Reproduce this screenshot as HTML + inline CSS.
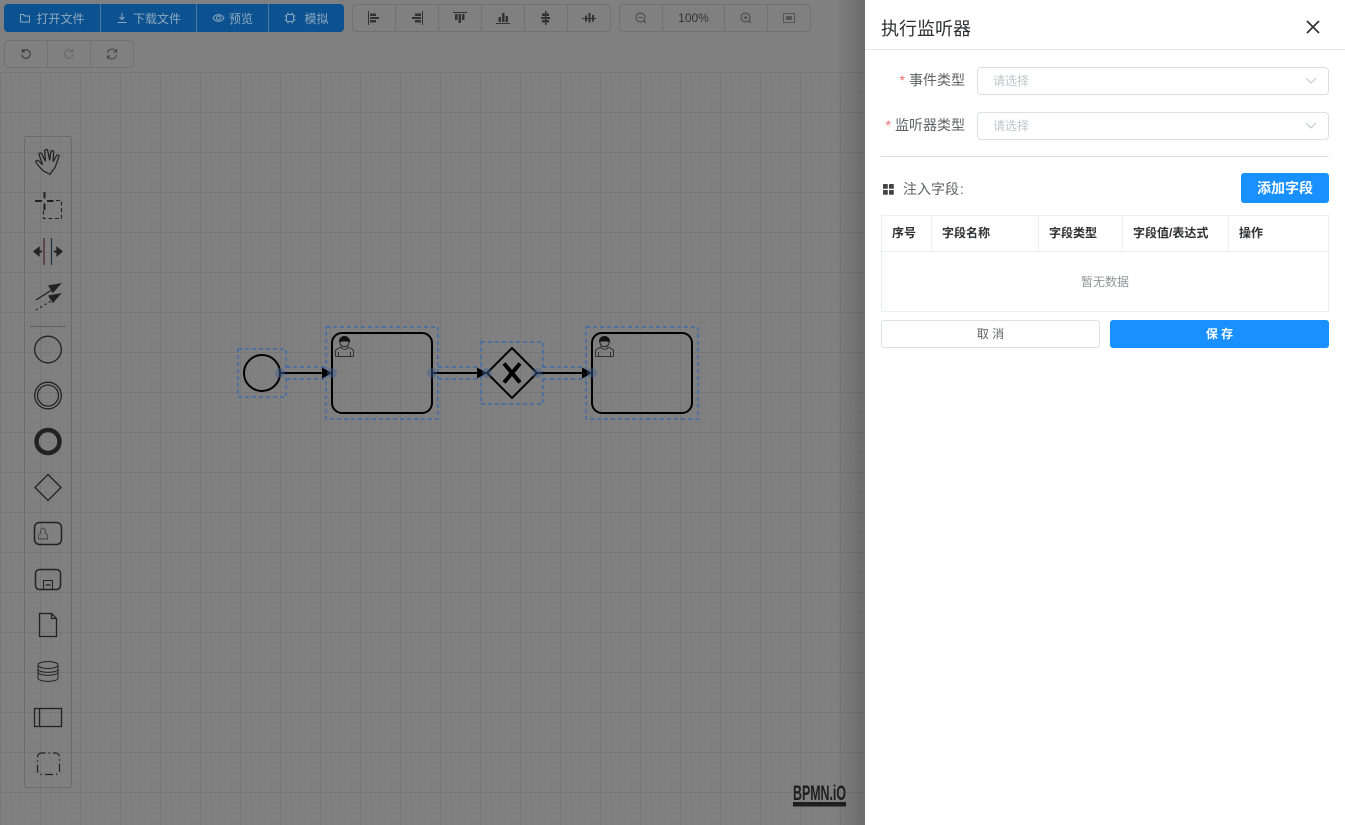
<!DOCTYPE html>
<html lang="zh"><head><meta charset="utf-8"><title>执行监听器</title>
<style>
*{box-sizing:border-box}
html,body{margin:0;padding:0;width:1345px;height:825px;overflow:hidden;background:#808080;font-family:"Liberation Sans","Noto Sans CJK SC",sans-serif}
.a{position:absolute}
#grid{left:0;top:72px;width:865px;height:753px;
background-image:linear-gradient(#767676 1px,transparent 1px),linear-gradient(90deg,#767676 1px,transparent 1px),linear-gradient(#7c7c7c 1px,transparent 1px),linear-gradient(90deg,#7c7c7c 1px,transparent 1px);
background-size:40px 40px,40px 40px,10px 10px,10px 10px;background-position:0 0,0 0,0 0,0 0}
.grp{position:absolute;height:28px;border:1px solid #717171;border-radius:4px;display:flex;color:#333;font-size:12px}
.grp>div{border-right:1px solid #717171;height:100%;display:flex;align-items:center;justify-content:center;white-space:nowrap}
.grp>div:last-child{border-right:0}
.prim{background:#0c5291;border:0;color:#8fa9bf;border-radius:4px}
.prim>div{border-right:1px solid #4d7ca8}
#shadow{left:835px;top:0;width:30px;height:825px;background:linear-gradient(90deg,rgba(0,0,0,0),rgba(0,0,0,.16))}
#panel{left:865px;top:0;width:480px;height:825px;background:#fff}
.lab{position:absolute;right:380px;font-size:14px;line-height:20px;color:#606266;white-space:nowrap}
.lab i{color:#f56c6c;font-style:normal;margin-right:4px}
.inp{position:absolute;left:112px;width:352px;height:28px;border:1px solid #dcdfe6;border-radius:4px;font-size:12px;line-height:26px;padding-left:15px;color:#c0c4cc}
.inp svg{position:absolute;right:11px;top:9px}
.th{position:absolute;top:216px;height:35px;line-height:34px;font-size:12px;font-weight:bold;color:#303133;white-space:nowrap}
.vl{position:absolute;top:216px;width:1px;height:35px;background:#ebeef5}
</style></head><body>
<div class="a" id="grid"></div>

<div class="grp prim" style="left:4px;top:4px;width:340px">
<div style="width:97px;gap:5px"><svg width="12" height="12" viewBox="0 0 12 12" fill="none" stroke="#8fa9bf"><path d="M1.500 10V2.500h3l1 1.500h5v6z"/></svg>打开文件</div>
<div style="width:96px;gap:5px"><svg width="12" height="12" viewBox="0 0 12 12" fill="none" stroke="#8fa9bf"><path d="M6 1v6M3.500 5L6 7.500 8.500 5M1.500 10.500h9"/></svg>下载文件</div>
<div style="width:72px;gap:4px"><svg width="13" height="12" viewBox="0 0 13 12" fill="none" stroke="#8fa9bf"><path d="M1 6c3-4.500 8-4.500 11 0-3 4.500-8 4.500-11 0z"/><circle cx="6.500" cy="6" r="2"/></svg>预览</div>
<div style="width:75px;gap:8px"><svg width="12" height="12" viewBox="0 0 12 12" fill="none" stroke="#8fa9bf"><rect x="2.500" y="2.500" width="7" height="7" rx="1"/><path d="M4 .5v2M8 .5v2M4 9.500v2M8 9.500v2M.5 4h2M.5 8h2M9.500 4h2M9.500 8h2"/></svg>模拟</div>
</div>

<div class="grp" style="left:352px;top:4px;width:259px">
<div style="width:43px"><svg width="14" height="14" viewBox="0 0 14 14" fill="#333"><path d="M1 0h1v14H1zM3 2.500h6v2.500H3zM3 6h9v2H3zM3 9h6v2.500H3z"/></svg></div>
<div style="width:43px"><svg width="14" height="14" viewBox="0 0 14 14" fill="#333"><path d="M12 0h1v14h-1zM5 2.500h6v2.500H5zM2 6h9v2H2zM5 9h6v2.500H5z"/></svg></div>
<div style="width:43px"><svg width="14" height="14" viewBox="0 0 14 14" fill="#333"><path d="M0 1h14v1H0zM2 3h2.500v6H2zM5.500 3h2.500v9H5.500zM9 3h2.500v6H9z"/></svg></div>
<div style="width:43px"><svg width="14" height="14" viewBox="0 0 14 14" fill="#333"><path d="M0 12h14v1H0zM2.500 6h2.500v5H2.500zM6 2h2.500v9H6zM9.500 5H12v6H9.500z"/></svg></div>
<div style="width:43px"><svg width="14" height="14" viewBox="0 0 14 14" fill="#333"><path d="M6 0h1.500v14H6zM3 2.500h7v2.500H3zM2 6h9v2H2zM3 9h7v2.500H3z"/></svg></div>
<div style="width:42px"><svg width="14" height="14" viewBox="0 0 14 14" fill="#333"><path d="M0 7h14v1H0zM3 4.500h2v6H3zM6.500 2h2v9.500h-2zM10 4h2v6.500h-2z"/></svg></div>
</div>

<div class="grp" style="left:619px;top:4px;width:192px">
<div style="width:43px"><svg width="12" height="12" viewBox="0 0 12 12" fill="none" stroke="#444"><circle cx="5.500" cy="5.500" r="4.500"/><path d="M3.500 5.500h4M9 9l2 2"/></svg></div>
<div style="width:62px;color:#333">100%</div>
<div style="width:43px"><svg width="12" height="12" viewBox="0 0 12 12" fill="none" stroke="#444"><circle cx="5.500" cy="5.500" r="4.500"/><path d="M3.500 5.500h4M5.500 3.500v4M9 9l2 2"/></svg></div>
<div style="width:42px"><svg width="12" height="10" viewBox="0 0 12 10" fill="none" stroke="#555"><rect x=".5" y=".5" width="11" height="9"/><rect x="3" y="3" width="6" height="4" fill="#555" stroke="none"/></svg></div>
</div>

<div class="grp" style="left:4px;top:40px;width:130px">
<div style="width:43px"><svg width="12" height="12" viewBox="0 0 12 12" fill="none" stroke="#333"><path d="M2.500 3.500A4.300 4.300 0 1 1 1.700 6.500M2.300 1v2.700H5"/></svg></div>
<div style="width:43px"><svg width="12" height="12" viewBox="0 0 12 12" fill="none" stroke="#666"><path d="M9.500 3.500A4.300 4.300 0 1 0 10.300 6.500M9.700 1v2.700H7"/></svg></div>
<div style="width:42px"><svg width="12" height="12" viewBox="0 0 12 12" fill="none" stroke="#444"><path d="M1.500 5A4.500 4.500 0 0 1 10 3.500M10.500 7A4.500 4.500 0 0 1 2 8.500M10.500 1v3h-3M1.500 11V8h3"/></svg></div>
</div>

<svg class="a" style="left:0;top:0" width="865" height="825" viewBox="0 0 865 825" fill="none">
<rect x="24.500" y="136.500" width="47" height="651" rx="2" stroke="#6c6c6c"/>
<path d="M30 326.500h36" stroke="#5f5f5f"/>
<g stroke="#222" stroke-width="1.300">
<path transform="translate(48 159.500) scale(1.250 1.150) translate(-45.500 -160.500)" d="M42 170.500c-3-3-5-5.500-6-7.500-.7-1.500 1-2.500 2.200-1.200l3 3.200-2.800-8.500c-.5-1.600 1.500-2.300 2.200-.8l2.900 6.500-.6-9c-.1-1.700 2.100-1.900 2.400-.3l1.500 8.300 1-7.400c.2-1.600 2.300-1.400 2.200.2l-.4 8.500 2.600-5.200c.7-1.400 2.500-.7 2 .8l-2.500 7.700c-.5 2-1.500 3-3 5l-1.500 2.700z" stroke-width="1"/>
<path d="M35 201h7M47 201h6.500M44.500 192v6.500M44.500 203.500v6.500" stroke-width="2"/>
<path d="M56 200.500h5.500v18h-18v-11" stroke-dasharray="4 2.500" stroke-width="1.100"/>
<path d="M44 238v27" stroke="#4a2030" stroke-width="1.200"/><path d="M51.500 238v27" stroke="#1f2f45" stroke-width="1.200"/>
<path d="M37 251.500h5M54 251.500h5" stroke-width="2"/><path d="M34 251.500l5-4v8zM62 251.500l-5-4v8z" fill="#222"/>
<path d="M36 300l18-11.500" stroke-width="1.300"/><path d="M60 284l-11 2 4 6z" fill="#222"/>
<path d="M36 310l15-9" stroke-dasharray="2 3"/><path d="M60 294l-11 2 4 6z" fill="#222"/>
<circle cx="48" cy="349.500" r="13.300"/>
<circle cx="48" cy="395.500" r="13.300"/><circle cx="48" cy="395.500" r="10.500"/>
<circle cx="48" cy="441.500" r="11.500" stroke-width="4.500"/>
<path d="M48 474.500l13 13-13 13-13-13z"/>
<rect x="34.500" y="522.500" width="27" height="22" rx="5" stroke-width="1.500"/>
<path d="M38.500 539v-4c0-1 2-1.500 2.500-2-1-2 0-5 2-5s3 3 2 5c.5.500 2.500 1 2.500 2v4z" stroke="#444" stroke-width=".9"/>
<rect x="35.500" y="569.500" width="25" height="20" rx="4" stroke-width="1.500"/><rect x="43.500" y="580.500" width="9" height="9" stroke-width="1"/><path d="M45.500 585h5"/>
<path d="M39.500 613.500h12l5 5v18h-17zM51.500 613.500v5h5"/>
<ellipse cx="48" cy="665" rx="10" ry="3.500" stroke-width="1"/><path d="M38 665v13c0 4.500 20 4.500 20 0v-13M38 669c0 4.500 20 4.500 20 0M38 672c0 4.500 20 4.500 20 0" stroke-width="1"/>
<rect x="34.500" y="708.500" width="27" height="18"/><path d="M39.500 708.500v18"/>
<rect x="37.500" y="753" width="22" height="21.500" rx="4" stroke-dasharray="8 3 1.500 3" stroke-dashoffset="4" stroke-width="1.200"/>
</g>

<g stroke="#4f6f9e" stroke-width="2" stroke-dasharray="4 3" >
<rect x="238" y="349" width="48" height="48"/>
<rect x="326" y="327" width="112" height="92"/>
<rect x="481" y="342" width="62" height="62"/>
<rect x="586" y="327" width="112" height="92"/>
<path d="M286 367h40M286 379h40M438 367h43M438 379h43M543 367h43M543 379h43"/>
</g>
<g stroke="#000" stroke-width="2">
<circle cx="262" cy="373" r="18"/>
<rect x="332" y="333" width="100" height="80" rx="10"/>
<rect x="592" y="333" width="100" height="80" rx="10"/>
<path d="M512 348l25 25-25 25-25-25z"/>
<path d="M280 373h44M432 373h47M537 373h47"/>
</g>
<path d="M322 367.500l10 5.500-10 5.500zM477 367.500l10 5.500-10 5.500zM582 367.500l10 5.500-10 5.500z" fill="#000"/>
<path d="M504 363.500l16 19M520 363.500l-16 19" stroke="#000" stroke-width="4"/>
<g fill="#3f5f96" fill-opacity=".45">
<circle cx="280" cy="373" r="5"/><circle cx="332" cy="373" r="5"/><circle cx="432" cy="373" r="5"/><circle cx="487" cy="373" r="5"/><circle cx="537" cy="373" r="5"/><circle cx="592" cy="373" r="5"/>
</g>
<g id="u">
<path d="M335.500 356.500v-5.500c0-2.500 5-3 6-4.500M353.500 356.500v-5.500c0-2.500-5-3-6-4.500M338.500 356.500v-4.500M350.500 356.500v-4.500M335.500 356.500h18M341 347c1 3 6.500 3 7 0" stroke="#333" stroke-width="1"/>
<path d="M339 342.500c-.5-3.500 2-6.500 5.500-6.500s6 3 5.500 6.500c-2-1.500-9-1.500-11 0z" fill="#111"/><path d="M340 342.500c0 5.500 9 5.500 9 0" stroke="#222"/>
</g>
<use href="#u" x="260"/>
<path d="M793 802h53v4.500h-53z" fill="#1e1e1e"/>
<text x="793" y="800" font-family="Liberation Sans,sans-serif" font-weight="bold" font-size="21" fill="#1e1e1e" textLength="53" lengthAdjust="spacingAndGlyphs">BPMN.iO</text>
</svg>

<div class="a" id="shadow"></div>

<div class="a" id="panel">
<div class="a" style="left:16px;top:16px;font-size:18px;line-height:26px;color:#303133">执行监听器</div>
<svg class="a" style="left:441px;top:20px" width="14" height="14" viewBox="0 0 14 14" fill="none" stroke="#303133" stroke-width="1.700"><path d="M1 1l12 12M13 1L1 13"/></svg>
<div class="a" style="left:0;top:49px;width:480px;height:1px;background:#e6e6e6"></div>

<div class="lab" style="top:70px"><i>*</i>事件类型</div>
<div class="inp" style="top:67px">请选择<svg width="12" height="8" viewBox="0 0 12 8" fill="none" stroke="#c0c4cc"><path d="M1 1l5 5 5-5"/></svg></div>
<div class="lab" style="top:115px"><i>*</i>监听器类型</div>
<div class="inp" style="top:112px">请选择<svg width="12" height="8" viewBox="0 0 12 8" fill="none" stroke="#c0c4cc"><path d="M1 1l5 5 5-5"/></svg></div>
<div class="a" style="left:16px;top:156px;width:448px;height:1px;background:#dcdfe6"></div>

<svg class="a" style="left:18px;top:184px" width="11" height="11" viewBox="0 0 11 11" fill="#444"><rect width="4.800" height="4.800" rx=".7"/><rect x="6" width="4.800" height="4.800" rx=".7"/><rect y="6" width="4.800" height="4.800" rx=".7"/><rect x="6" y="6" width="4.800" height="4.800" rx=".7"/></svg>
<div class="a" style="left:38px;top:179px;font-size:14px;line-height:20px;color:#606266;white-space:nowrap">注入字段<span style="margin-left:1px">:</span></div>
<div class="a" style="left:376px;top:173px;width:88px;height:30px;background:#1890ff;border-radius:3px;color:#fff;font-size:14px;font-weight:bold;line-height:30px;text-align:center">添加字段</div>

<div class="a" style="left:16px;top:215px;width:448px;height:97px;border:1px solid #ebeef5"></div>
<div class="a" style="left:16px;top:251px;width:448px;height:1px;background:#ebeef5"></div>
<div class="vl" style="left:66px"></div><div class="vl" style="left:173px"></div><div class="vl" style="left:257px"></div><div class="vl" style="left:363px"></div>
<div class="th" style="left:27px">序号</div><div class="th" style="left:77px">字段名称</div><div class="th" style="left:184px">字段类型</div><div class="th" style="left:268px">字段值/表达式</div><div class="th" style="left:374px">操作</div>
<div class="a" style="left:16px;top:273px;width:448px;text-align:center;font-size:12px;line-height:18px;color:#909399">暂无数据</div>

<div class="a" style="left:16px;top:320px;width:219px;height:28px;border:1px solid #dcdfe6;border-radius:3px;color:#606266;font-size:12px;line-height:26px;text-align:center">取 消</div>
<div class="a" style="left:245px;top:320px;width:219px;height:28px;background:#1890ff;border-radius:3px;color:#fff;font-size:12px;font-weight:bold;line-height:28px;text-align:center">保 存</div>
</div>
</body></html>
